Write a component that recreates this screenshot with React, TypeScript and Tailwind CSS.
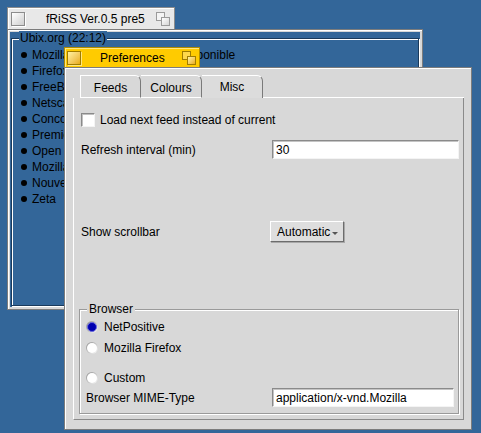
import React from "react";

function CloseBox({ active }: { active?: boolean }) {
  return active ? (
    <div className="h-[14px] w-[14px] border border-[#a07c00] bg-gradient-to-br from-[#fff2a0] to-[#e8ac00] shadow-[1px_1px_0_#ffe680]" />
  ) : (
    <div className="h-[14px] w-[14px] border border-[#8c8c8c] bg-gradient-to-br from-white to-[#cfcfcf] shadow-[1px_1px_0_#fff]" />
  );
}

function ZoomBox({ active }: { active?: boolean }) {
  const big = active
    ? "border-[#a07c00] bg-gradient-to-br from-[#fff2a0] to-[#e8ac00]"
    : "border-[#9a9a9a] bg-gradient-to-br from-white to-[#d4d4d4]";
  const small = active
    ? "border-[#a07c00] bg-[#ffd84a]"
    : "border-[#9a9a9a] bg-[#f4f4f4]";
  return (
    <div className="relative h-[14px] w-[14px]">
      <div className={`absolute left-0 top-0 h-[9px] w-[9px] border ${small}`} />
      <div className={`absolute bottom-0 right-0 h-[9px] w-[9px] border ${big}`} />
    </div>
  );
}

function TextField({ value, width }: { value: string; width: string }) {
  return (
    <div
      className={`flex h-[19px] ${width} items-center border border-b-[#f4f4f4] border-l-[#8a8a8a] border-r-[#f4f4f4] border-t-[#8a8a8a] bg-white pl-[3px] shadow-[inset_1px_1px_0_#c4c4c4]`}
    >
      {value}
    </div>
  );
}

function Radio({ checked }: { checked?: boolean }) {
  return (
    <div className="flex h-[12px] w-[12px] items-center justify-center rounded-full bg-gradient-to-br from-[#8c8c8c] to-white">
      <div
        className={`h-[10px] w-[10px] rounded-full ${
          checked ? "border border-[#6a6ae0] bg-[#0000b0]" : "bg-white"
        }`}
      />
    </div>
  );
}

const items = [
  "Mozilla Thunderbird 1.0 RC disponible",
  "Firefox",
  "FreeBSD",
  "Netscape",
  "Concours",
  "Premier",
  "Open",
  "Mozilla",
  "Nouveau",
  "Zeta",
];

function BackWindow() {
  return (
    <div className="absolute left-[7px] top-[7px] w-[416px]">
      <div className="flex h-[22px] w-[168px] items-center border border-b-0 border-[#8c8c8c] bg-[#e8e8e8] pl-[3px] pr-[4px] shadow-[inset_1px_1px_0_#fff]">
        <CloseBox />
        <span className="ml-[21px]">fRiSS Ver.0.5 pre5</span>
        <div className="ml-auto">
          <ZoomBox />
        </div>
      </div>
      <div className="h-[281px] border border-[#7c7c7c] bg-[#d8d8d8] p-[2px] shadow-[inset_1px_1px_0_#fff]">
        <div className="h-full bg-[#336699] pb-[1px] pl-[1px] pr-[1px] pt-[6px]">
          <div className="relative h-full border border-[#1a3a5c] shadow-[1px_1px_0_#fff,inset_1px_1px_0_#fff]">
            <span className="absolute -top-[8px] left-[7px] bg-[#336699] px-[1px] leading-[14px]">
              Ubix.org (22:12)
            </span>
            <div className="flex flex-col pt-[8px]">
              {items.map((t) => (
                <div key={t} className="flex h-[16px] items-center pl-[9px]">
                  <div className="h-[6px] w-[6px] rounded-full bg-black" />
                  <span className="ml-[5px] whitespace-nowrap">{t}</span>
                </div>
              ))}
            </div>
          </div>
        </div>
      </div>
    </div>
  );
}

function Tab({ label, active, first }: { label: string; active?: boolean; first?: boolean }) {
  return (
    <div
      className={`flex h-[23px] w-[61px] items-center justify-center rounded-tr-[6px] border-r border-t border-r-[#7a7a7a] border-t-white ${
        first ? "border-l border-l-white" : ""
      } ${active ? "bg-[#dcdcdc]" : "border-b border-b-white bg-[#d8d8d8] pt-[2px]"}`}
    >
      {label}
    </div>
  );
}

function PrefWindow() {
  return (
    <div className="absolute left-[64px] top-[47px] w-[408px]">
      <div className="flex h-[20px] w-[136px] items-center border border-b-0 border-[#b08c00] bg-[#ffcb00] pl-[2px] pr-[3px] shadow-[inset_1px_1px_0_#ffe680]">
        <CloseBox active />
        <span className="ml-[19px]">Preferences</span>
        <div className="ml-auto">
          <ZoomBox active />
        </div>
      </div>
      <div className="h-[363px] border border-[#7c7c7c] bg-[#d8d8d8] p-[4px] shadow-[inset_1px_1px_0_#fff]">
        <div className="flex h-full flex-col pb-[5px] pl-[4px] pr-[3px] pt-[3px]">
          <div className="flex pl-[7px]">
            <Tab label="Feeds" first />
            <Tab label="Colours" />
            <Tab label="Misc" active />
            <div className="flex-1 border-b border-b-white" />
          </div>
          <div className="flex flex-1 flex-col border-b border-l border-r border-b-[#8a8a8a] border-l-white border-r-[#8a8a8a]">
            <div className="mt-[15px] flex items-center pl-[7px]">
              <div className="h-[14px] w-[14px] border border-b-[#f4f4f4] border-l-[#8a8a8a] border-r-[#f4f4f4] border-t-[#8a8a8a] bg-white shadow-[inset_1px_1px_0_#c0c0c0]" />
              <span className="ml-[5px]">Load next feed instead of current</span>
            </div>

            <div className="mt-[13px] flex items-center pl-[7px]">
              <span className="w-[191px]">Refresh interval (min)</span>
              <TextField value="30" width="w-[187px]" />
            </div>

            <div className="mt-[62px] flex items-center pl-[7px]">
              <span className="w-[189px]">Show scrollbar</span>
              <div className="flex h-[21px] w-[74px] items-center border border-b-[#6c6c6c] border-l-white border-r-[#6c6c6c] border-t-white bg-[#dedede] pl-[6px] shadow-[1px_1px_0_#a8a8a8]">
                <span>Automatic</span>
                <svg width="6" height="4" viewBox="0 0 6 4" className="ml-[2px] mt-[5px]">
                  <path d="M0 0 H6 L3 3 Z" fill="#555" />
                </svg>
              </div>
            </div>

            <div className="relative ml-[5px] mr-[4px] mt-[67px] flex h-[105px] flex-col border border-[#9a9a9a] pl-[6px] shadow-[1px_1px_0_#fff,inset_1px_1px_0_#fff]">
              <span className="absolute -top-[8px] left-[7px] bg-[#d8d8d8] px-[2px] leading-[14px]">
                Browser
              </span>
              <div className="mt-[11px] flex h-[12px] items-center">
                <Radio checked />
                <span className="ml-[6px]">NetPositive</span>
              </div>
              <div className="mt-[9px] flex h-[12px] items-center">
                <Radio />
                <span className="ml-[6px]">Mozilla Firefox</span>
              </div>
              <div className="mt-[18px] flex h-[12px] items-center">
                <Radio />
                <span className="ml-[6px]">Custom</span>
              </div>
              <div className="mt-[4px] flex items-center">
                <span className="w-[186px]">Browser MIME-Type</span>
                <TextField value="application/x-vnd.Mozilla" width="w-[182px]" />
              </div>
            </div>
          </div>
        </div>
      </div>
    </div>
  );
}

export default function App() {
  return (
    <div className="relative h-[433px] w-[481px] overflow-hidden bg-[#336699] font-['Liberation_Sans',Arial,sans-serif] text-[12px] leading-none text-black">
      <BackWindow />
      <PrefWindow />
    </div>
  );
}
